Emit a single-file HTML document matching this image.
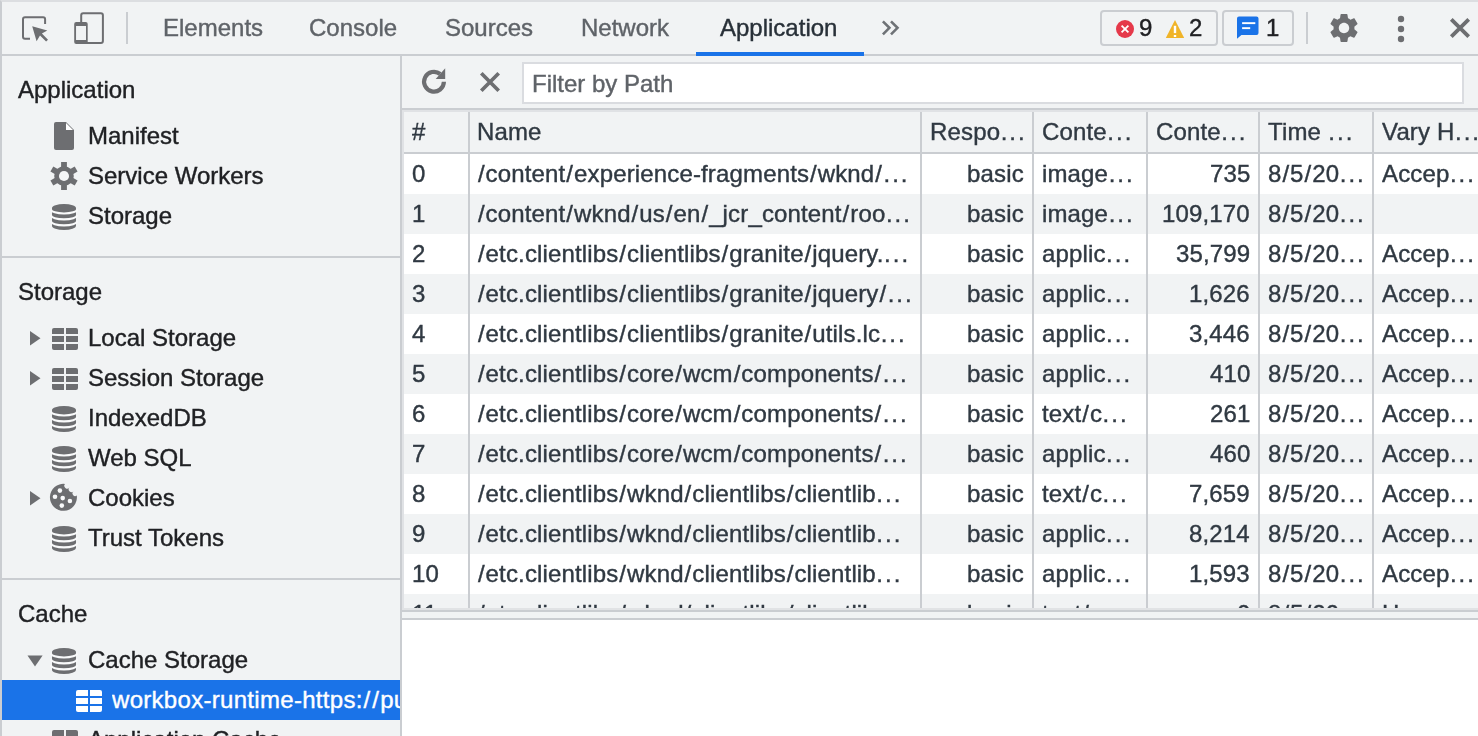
<!DOCTYPE html>
<html><head><meta charset="utf-8">
<style>
*{margin:0;padding:0;box-sizing:border-box}
html,body{width:1478px;height:736px;overflow:hidden;background:#fff}
body{-webkit-font-smoothing:antialiased;-webkit-text-stroke:0.4px currentColor;font-family:"Liberation Sans",sans-serif;font-size:24px;position:relative}
.a{position:absolute;white-space:nowrap}
.t{will-change:transform;position:absolute;white-space:nowrap;line-height:28px;height:28px}
#top{left:0;top:0;width:1478px;height:56px;background:#f1f3f4;border-bottom:2px solid #cacdd1;border-top:2px solid #dcdee1;border-left:2px solid #cacdd1}
.tab{color:#5f6368}
#side{left:0;top:56px;width:402px;height:680px;background:#f1f3f4;border-left:2px solid #cacdd1;border-right:2px solid #cacdd1}
.sh{color:#202124}
.si{color:#202124}
.sep{position:absolute;left:2px;width:398px;height:2px;background:#cacdd1}
#main{left:402px;top:56px;width:1076px;height:680px;background:#fff}
#ptb{left:402px;top:56px;width:1076px;height:54px;background:#f1f3f4;border-bottom:2px solid #cacdd1}
#filter{left:522px;top:62px;width:942px;height:42px;background:#fff;border:2px solid #dadce0}
#grid{left:402px;top:110px;width:1076px;height:498px;overflow:hidden;background:#fff;border-left:2px solid #e0e2e5;border-top:2px solid #e0e2e5}
.hdr{position:absolute;left:0;top:0;width:1076px;height:42px;background:#f1f3f4;border-bottom:2px solid #cacdd1}
.row{position:absolute;left:0;width:1076px;height:40px}
.row.g{background:#f1f3f4}
.c{will-change:transform;position:absolute;white-space:nowrap;overflow:hidden;color:#303942;line-height:28px;height:28px}
.s{margin:0 .9px}
.e{letter-spacing:2px;margin-left:.5px}
.c{letter-spacing:.15px}
.vl{position:absolute;top:0;width:2px;height:498px;background:#cacdd1}
</style></head><body>
<div id="top" class="a"></div>
<div class="t tab" style="left:163px;top:14px">Elements</div>
<div class="t tab" style="left:309px;top:14px">Console</div>
<div class="t tab" style="left:445px;top:14px">Sources</div>
<div class="t tab" style="left:581px;top:14px">Network</div>
<div class="t" style="left:720px;top:14px;color:#283038">Application</div>
<div class="a" style="left:696px;top:52px;width:168px;height:4px;background:#1a73e8"></div>
<div class="a" style="left:1100px;top:10px;width:118px;height:36px;border:2px solid #cacdd1;border-radius:4px"></div>
<div class="a" style="left:1222px;top:10px;width:72px;height:36px;border:2px solid #cacdd1;border-radius:4px"></div>
<div class="t" style="left:1139px;top:14px;color:#202124">9</div>
<div class="t" style="left:1189px;top:14px;color:#202124">2</div>
<div class="t" style="left:1266px;top:14px;color:#202124">1</div>
<div id="side" class="a"></div>
<div class="sep" style="top:256px"></div>
<div class="sep" style="top:578px"></div>
<div class="a" style="left:2px;top:680px;width:398px;height:40px;background:#1a73e8"></div>
<div class="t sh" style="left:18px;top:76px">Application</div>
<div class="t si" style="left:88px;top:122px">Manifest</div>
<div class="t si" style="left:88px;top:162px">Service Workers</div>
<div class="t si" style="left:88px;top:202px">Storage</div>
<div class="t sh" style="left:18px;top:278px">Storage</div>
<div class="t si" style="left:88px;top:324px">Local Storage</div>
<div class="t si" style="left:88px;top:364px">Session Storage</div>
<div class="t si" style="left:88px;top:404px">IndexedDB</div>
<div class="t si" style="left:88px;top:444px">Web SQL</div>
<div class="t si" style="left:88px;top:484px">Cookies</div>
<div class="t si" style="left:88px;top:524px">Trust Tokens</div>
<div class="t sh" style="left:18px;top:600px">Cache</div>
<div class="t si" style="left:88px;top:646px">Cache Storage</div>
<div class="t si" style="left:88px;top:726px">Application Cache</div>
<div class="a" style="left:112px;top:686px;width:288px;height:28px;line-height:28px;overflow:hidden;color:#fff;letter-spacing:.3px">workbox-runtime-https:<span class="s">/</span><span class="s">/</span>publish-p24020-e217804.adobeaemcloud.com/</div>
<div id="main" class="a"></div>
<div id="ptb" class="a"></div>
<div id="filter" class="a"></div>
<div class="t" style="left:532px;top:70px;color:#5f6368">Filter by Path</div>
<div class="a" style="left:402px;top:608px;width:1076px;height:12px;background:#f1f3f4;border-top:2px solid #e1e3e5;border-bottom:2px solid #cacdd1"></div><div class="a" style="left:402px;top:610px;width:1076px;height:2px;background:#cacdd1"></div>
<div id="grid" class="a">
<div class="hdr"></div>
<div class="c" style="left:8px;top:6px">#</div>
<div class="c" style="left:73px;top:6px">Name</div>
<div class="c" style="left:526px;top:6px">Respo<span class="e">...</span></div>
<div class="c" style="left:638px;top:6px">Conte<span class="e">...</span></div>
<div class="c" style="left:752px;top:6px">Conte<span class="e">...</span></div>
<div class="c" style="left:864px;top:6px">Time <span class="e">...</span></div>
<div class="c" style="left:978px;top:6px">Vary H<span class="e">...</span></div>
<div class="row" style="top:42px"><div class="c" style="left:8px;top:6px">0</div><div class="c" style="left:73px;top:6px"><span class="s">/</span>content<span class="s">/</span>experience-fragments<span class="s">/</span>wknd<span class="s">/</span><span class="e">...</span></div><div class="c" style="right:456px;top:6px">basic</div><div class="c" style="left:638px;top:6px">image<span class="e">...</span></div><div class="c" style="right:230px;top:6px">735</div><div class="c" style="left:864px;top:6px">8<span class="s">/</span>5<span class="s">/</span>20<span class="e">...</span></div><div class="c" style="left:978px;top:6px">Accep<span class="e">...</span></div></div>
<div class="row g" style="top:82px"><div class="c" style="left:8px;top:6px">1</div><div class="c" style="left:73px;top:6px"><span class="s">/</span>content<span class="s">/</span>wknd<span class="s">/</span>us<span class="s">/</span>en<span class="s">/</span>_jcr_content<span class="s">/</span>roo<span class="e">...</span></div><div class="c" style="right:456px;top:6px">basic</div><div class="c" style="left:638px;top:6px">image<span class="e">...</span></div><div class="c" style="right:230px;top:6px">109,170</div><div class="c" style="left:864px;top:6px">8<span class="s">/</span>5<span class="s">/</span>20<span class="e">...</span></div></div>
<div class="row" style="top:122px"><div class="c" style="left:8px;top:6px">2</div><div class="c" style="left:73px;top:6px"><span class="s">/</span>etc.clientlibs<span class="s">/</span>clientlibs<span class="s">/</span>granite<span class="s">/</span>jquery.<span class="e">...</span></div><div class="c" style="right:456px;top:6px">basic</div><div class="c" style="left:638px;top:6px">applic<span class="e">...</span></div><div class="c" style="right:230px;top:6px">35,799</div><div class="c" style="left:864px;top:6px">8<span class="s">/</span>5<span class="s">/</span>20<span class="e">...</span></div><div class="c" style="left:978px;top:6px">Accep<span class="e">...</span></div></div>
<div class="row g" style="top:162px"><div class="c" style="left:8px;top:6px">3</div><div class="c" style="left:73px;top:6px"><span class="s">/</span>etc.clientlibs<span class="s">/</span>clientlibs<span class="s">/</span>granite<span class="s">/</span>jquery<span class="s">/</span><span class="e">...</span></div><div class="c" style="right:456px;top:6px">basic</div><div class="c" style="left:638px;top:6px">applic<span class="e">...</span></div><div class="c" style="right:230px;top:6px">1,626</div><div class="c" style="left:864px;top:6px">8<span class="s">/</span>5<span class="s">/</span>20<span class="e">...</span></div><div class="c" style="left:978px;top:6px">Accep<span class="e">...</span></div></div>
<div class="row" style="top:202px"><div class="c" style="left:8px;top:6px">4</div><div class="c" style="left:73px;top:6px"><span class="s">/</span>etc.clientlibs<span class="s">/</span>clientlibs<span class="s">/</span>granite<span class="s">/</span>utils.lc<span class="e">...</span></div><div class="c" style="right:456px;top:6px">basic</div><div class="c" style="left:638px;top:6px">applic<span class="e">...</span></div><div class="c" style="right:230px;top:6px">3,446</div><div class="c" style="left:864px;top:6px">8<span class="s">/</span>5<span class="s">/</span>20<span class="e">...</span></div><div class="c" style="left:978px;top:6px">Accep<span class="e">...</span></div></div>
<div class="row g" style="top:242px"><div class="c" style="left:8px;top:6px">5</div><div class="c" style="left:73px;top:6px"><span class="s">/</span>etc.clientlibs<span class="s">/</span>core<span class="s">/</span>wcm<span class="s">/</span>components<span class="s">/</span><span class="e">...</span></div><div class="c" style="right:456px;top:6px">basic</div><div class="c" style="left:638px;top:6px">applic<span class="e">...</span></div><div class="c" style="right:230px;top:6px">410</div><div class="c" style="left:864px;top:6px">8<span class="s">/</span>5<span class="s">/</span>20<span class="e">...</span></div><div class="c" style="left:978px;top:6px">Accep<span class="e">...</span></div></div>
<div class="row" style="top:282px"><div class="c" style="left:8px;top:6px">6</div><div class="c" style="left:73px;top:6px"><span class="s">/</span>etc.clientlibs<span class="s">/</span>core<span class="s">/</span>wcm<span class="s">/</span>components<span class="s">/</span><span class="e">...</span></div><div class="c" style="right:456px;top:6px">basic</div><div class="c" style="left:638px;top:6px">text<span class="s">/</span>c<span class="e">...</span></div><div class="c" style="right:230px;top:6px">261</div><div class="c" style="left:864px;top:6px">8<span class="s">/</span>5<span class="s">/</span>20<span class="e">...</span></div><div class="c" style="left:978px;top:6px">Accep<span class="e">...</span></div></div>
<div class="row g" style="top:322px"><div class="c" style="left:8px;top:6px">7</div><div class="c" style="left:73px;top:6px"><span class="s">/</span>etc.clientlibs<span class="s">/</span>core<span class="s">/</span>wcm<span class="s">/</span>components<span class="s">/</span><span class="e">...</span></div><div class="c" style="right:456px;top:6px">basic</div><div class="c" style="left:638px;top:6px">applic<span class="e">...</span></div><div class="c" style="right:230px;top:6px">460</div><div class="c" style="left:864px;top:6px">8<span class="s">/</span>5<span class="s">/</span>20<span class="e">...</span></div><div class="c" style="left:978px;top:6px">Accep<span class="e">...</span></div></div>
<div class="row" style="top:362px"><div class="c" style="left:8px;top:6px">8</div><div class="c" style="left:73px;top:6px"><span class="s">/</span>etc.clientlibs<span class="s">/</span>wknd<span class="s">/</span>clientlibs<span class="s">/</span>clientlib<span class="e">...</span></div><div class="c" style="right:456px;top:6px">basic</div><div class="c" style="left:638px;top:6px">text<span class="s">/</span>c<span class="e">...</span></div><div class="c" style="right:230px;top:6px">7,659</div><div class="c" style="left:864px;top:6px">8<span class="s">/</span>5<span class="s">/</span>20<span class="e">...</span></div><div class="c" style="left:978px;top:6px">Accep<span class="e">...</span></div></div>
<div class="row g" style="top:402px"><div class="c" style="left:8px;top:6px">9</div><div class="c" style="left:73px;top:6px"><span class="s">/</span>etc.clientlibs<span class="s">/</span>wknd<span class="s">/</span>clientlibs<span class="s">/</span>clientlib<span class="e">...</span></div><div class="c" style="right:456px;top:6px">basic</div><div class="c" style="left:638px;top:6px">applic<span class="e">...</span></div><div class="c" style="right:230px;top:6px">8,214</div><div class="c" style="left:864px;top:6px">8<span class="s">/</span>5<span class="s">/</span>20<span class="e">...</span></div><div class="c" style="left:978px;top:6px">Accep<span class="e">...</span></div></div>
<div class="row" style="top:442px"><div class="c" style="left:8px;top:6px">10</div><div class="c" style="left:73px;top:6px"><span class="s">/</span>etc.clientlibs<span class="s">/</span>wknd<span class="s">/</span>clientlibs<span class="s">/</span>clientlib<span class="e">...</span></div><div class="c" style="right:456px;top:6px">basic</div><div class="c" style="left:638px;top:6px">applic<span class="e">...</span></div><div class="c" style="right:230px;top:6px">1,593</div><div class="c" style="left:864px;top:6px">8<span class="s">/</span>5<span class="s">/</span>20<span class="e">...</span></div><div class="c" style="left:978px;top:6px">Accep<span class="e">...</span></div></div>
<div class="row g" style="top:482px"><div class="c" style="left:8px;top:6px">11</div><div class="c" style="left:73px;top:6px"><span class="s">/</span>etc.clientlibs<span class="s">/</span>wknd<span class="s">/</span>clientlibs<span class="s">/</span>clientlib<span class="e">...</span></div><div class="c" style="right:456px;top:6px">basic</div><div class="c" style="left:638px;top:6px">text<span class="s">/</span>c<span class="e">...</span></div><div class="c" style="right:230px;top:6px">0</div><div class="c" style="left:864px;top:6px">8<span class="s">/</span>5<span class="s">/</span>20<span class="e">...</span></div><div class="c" style="left:978px;top:6px">Hea<span class="e">...</span></div></div>
<div class="vl" style="left:64px"></div>
<div class="vl" style="left:516px"></div>
<div class="vl" style="left:628px"></div>
<div class="vl" style="left:742px"></div>
<div class="vl" style="left:854px"></div>
<div class="vl" style="left:968px"></div>
</div>
<svg class="a" style="left:0;top:0" width="1478" height="736" viewBox="0 0 1478 736"><path d="M30,38.8 H25 a2,2 0 0 1 -2,-2 V19.2 a2,2 0 0 1 2,-2 H43.1 a2,2 0 0 1 2,2 V24" fill="none" stroke="#6d6e71" stroke-width="2"/><path d="M32.2,26.2 L47.3,30.6 L41.9,33.6 L48,39.7 L46.1,41.6 L40,35.5 L36.6,41.2 Z" fill="#6d6e71"/><rect x="81.2" y="13.2" width="21.7" height="29.7" rx="2" fill="none" stroke="#6d6e71" stroke-width="2"/><path fill-rule="evenodd" d="M76.2,22 H85.7 a2,2 0 0 1 2,2 V42 a2,2 0 0 1 -2,2 H76.2 a2,2 0 0 1 -2,-2 V24 a2,2 0 0 1 2,-2 Z M76.2,26 V40 H85.9 V26 Z" fill="#6d6e71"/><path d="M76.2,26 V40 H85.9 V26 Z" fill="#f1f3f4"/><rect x="126" y="12" width="2" height="32" fill="#cacdd1"/><path d="M882.9,21.3 L889.4,27.8 L882.9,34.3 M891,21.3 L897.5,27.8 L891,34.3" fill="none" stroke="#6e7276" stroke-width="2.6"/><circle cx="1125" cy="29" r="9" fill="#e5394a"/><path d="M1121.6,25.6 L1128.4,32.4 M1128.4,25.6 L1121.6,32.4" stroke="#fff" stroke-width="1.8"/><path d="M1175,20 L1184.2,37.9 H1165.8 Z" fill="#f0b429"/><rect x="1173.8" y="25.8" width="2.4" height="7.3" fill="#fff"/><rect x="1173.8" y="35" width="2.4" height="2" fill="#fff"/><path d="M1239,16.4 H1256.5 a2,2 0 0 1 2,2 V32.9 a2,2 0 0 1 -2,2 H1241.4 L1237,38.8 V18.4 a2,2 0 0 1 2,-2 Z" fill="#1a73e8"/><rect x="1242.1" y="22.2" width="13.2" height="1.9" fill="#fff"/><rect x="1242.1" y="27.2" width="8.1" height="1.9" fill="#fff"/><rect x="1306" y="12" width="2" height="32" fill="#cacdd1"/><path transform="translate(1326.59,10.59) scale(1.4508)" d="M19.14,12.94c0.04-0.3,0.06-0.61,0.06-0.94c0-0.32-0.02-0.64-0.07-0.94l2.03-1.58c0.18-0.14,0.23-0.41,0.12-0.61l-1.92-3.32c-0.12-0.22-0.37-0.29-0.59-0.22l-2.39,0.96c-0.5-0.38-1.03-0.7-1.620-0.94L14.4,2.81c-0.04-0.24-0.24-0.41-0.48-0.41h-3.84c-0.24,0-0.43,0.17-0.47,0.41L9.25,5.35C8.66,5.59,8.12,5.92,7.63,6.29L5.24,5.33c-0.22-0.08-0.47,0-0.59,0.22L2.74,8.87C2.62,9.08,2.66,9.34,2.86,9.48l2.03,1.58C4.84,11.36,4.8,11.690,4.8,12s0.02,0.64,0.07,0.94l-2.03,1.58c-0.18,0.14-0.23,0.41-0.12,0.61l1.92,3.32c0.12,0.22,0.37,0.29,0.59,0.22l2.39-0.96c0.5,0.38,1.03,0.7,1.62,0.94l0.36,2.54c0.05,0.24,0.24,0.41,0.48,0.41h3.84c0.24,0,0.44-0.17,0.47-0.41l0.36-2.54c0.59-0.24,1.13-0.56,1.62-0.94l2.39,0.96c0.22,0.08,0.47,0,0.59-0.22l1.92-3.32c0.12-0.22,0.07-0.47-0.12-0.61L19.14,12.94z M12,15.6c-1.98,0-3.6-1.62-3.6-3.6s1.62-3.6,3.6-3.6s3.6,1.62,3.6,3.6S13.98,15.6,12,15.6z" fill="#6d6e71"/><circle cx="1401" cy="19" r="3.2" fill="#6d6e71"/><circle cx="1401" cy="29" r="3.2" fill="#6d6e71"/><circle cx="1401" cy="39" r="3.2" fill="#6d6e71"/><path d="M1451.3,19.3 L1468.7,36.7 M1468.7,19.3 L1451.3,36.7" stroke="#6d6e71" stroke-width="3.8"/><path d="M443.9,81.8 A9.9,9.9 0 1 1 440.2,74.0" fill="none" stroke="#6d6e71" stroke-width="4.2"/><path d="M435.7,79 L445.2,68.3 V79 Z" fill="#6d6e71"/><path d="M481.3,73.3 L498.7,90.7 M498.7,73.3 L481.3,90.7" stroke="#6d6e71" stroke-width="3.7"/><path d="M56,122 H66 L74,130 V148 a2,2 0 0 1 -2,2 H56 a2,2 0 0 1 -2,-2 V124 a2,2 0 0 1 2,-2 Z" fill="#6d6e71"/><path d="M66,123 L73,130 H66 Z" fill="#fff"/><g transform="translate(64,176)"><circle r="9.8" fill="#6d6e71"/><rect x="-2.9" y="-14" width="5.8" height="14" fill="#6d6e71" transform="rotate(0)"/><rect x="-2.9" y="-14" width="5.8" height="14" fill="#6d6e71" transform="rotate(60)"/><rect x="-2.9" y="-14" width="5.8" height="14" fill="#6d6e71" transform="rotate(120)"/><rect x="-2.9" y="-14" width="5.8" height="14" fill="#6d6e71" transform="rotate(180)"/><rect x="-2.9" y="-14" width="5.8" height="14" fill="#6d6e71" transform="rotate(240)"/><rect x="-2.9" y="-14" width="5.8" height="14" fill="#6d6e71" transform="rotate(300)"/><circle r="5.05" fill="#f5f6f7"/></g><path d="M52,208.05 A12,4.05 0 0 1 76,208.05 L76,226 A12,4.05 0 0 1 52,226 Z" fill="#6d6e71"/><path d="M51,209.40 A13,4.05 0 0 0 77,209.40" fill="none" stroke="#f9fafb" stroke-width="2.1"/><path d="M51,215.35 A13,4.05 0 0 0 77,215.35" fill="none" stroke="#f9fafb" stroke-width="2.1"/><path d="M51,221.30 A13,4.05 0 0 0 77,221.30" fill="none" stroke="#f9fafb" stroke-width="2.1"/><path d="M30,331 L40.5,338.2 L30,345.4 Z" fill="#6d6e71"/><g fill="#6d6e71"><path d="M52,334 V330 a2,2 0 0 1 2,-2 H64 V334 Z"/><path d="M66,328 H76 a2,2 0 0 1 2,2 V334 H66 Z"/><rect x="52" y="336" width="12" height="6"/><rect x="66" y="336" width="12" height="6"/><path d="M52,344 H64 V350 H54 a2,2 0 0 1 -2,-2 Z"/><path d="M66,344 H78 V348 a2,2 0 0 1 -2,2 H66 Z"/></g><path d="M30,371 L40.5,378.2 L30,385.4 Z" fill="#6d6e71"/><g fill="#6d6e71"><path d="M52,374 V370 a2,2 0 0 1 2,-2 H64 V374 Z"/><path d="M66,368 H76 a2,2 0 0 1 2,2 V374 H66 Z"/><rect x="52" y="376" width="12" height="6"/><rect x="66" y="376" width="12" height="6"/><path d="M52,384 H64 V390 H54 a2,2 0 0 1 -2,-2 Z"/><path d="M66,384 H78 V388 a2,2 0 0 1 -2,2 H66 Z"/></g><path d="M52,410.05 A12,4.05 0 0 1 76,410.05 L76,428 A12,4.05 0 0 1 52,428 Z" fill="#6d6e71"/><path d="M51,411.40 A13,4.05 0 0 0 77,411.40" fill="none" stroke="#f9fafb" stroke-width="2.1"/><path d="M51,417.35 A13,4.05 0 0 0 77,417.35" fill="none" stroke="#f9fafb" stroke-width="2.1"/><path d="M51,423.30 A13,4.05 0 0 0 77,423.30" fill="none" stroke="#f9fafb" stroke-width="2.1"/><path d="M52,450.05 A12,4.05 0 0 1 76,450.05 L76,468 A12,4.05 0 0 1 52,468 Z" fill="#6d6e71"/><path d="M51,451.40 A13,4.05 0 0 0 77,451.40" fill="none" stroke="#f9fafb" stroke-width="2.1"/><path d="M51,457.35 A13,4.05 0 0 0 77,457.35" fill="none" stroke="#f9fafb" stroke-width="2.1"/><path d="M51,463.30 A13,4.05 0 0 0 77,463.30" fill="none" stroke="#f9fafb" stroke-width="2.1"/><path d="M30,491 L40.5,498.2 L30,505.4 Z" fill="#6d6e71"/><path d="M65,483.9 A13.5,13.5 0 1 0 76.8,495.5 A2.6,2.6 0 0 1 73.6,491.2 A2.6,2.6 0 0 1 69.4,487.6 A2.6,2.6 0 0 1 65,483.9 Z" fill="#6d6e71"/><circle cx="59.9" cy="490.6" r="2.3" fill="#f9fafb"/><circle cx="55" cy="496.7" r="2.3" fill="#f9fafb"/><circle cx="62.7" cy="498.1" r="2.3" fill="#f9fafb"/><circle cx="69.9" cy="501" r="2.3" fill="#f9fafb"/><circle cx="61.8" cy="505.6" r="2.3" fill="#f9fafb"/><path d="M52,530.05 A12,4.05 0 0 1 76,530.05 L76,548 A12,4.05 0 0 1 52,548 Z" fill="#6d6e71"/><path d="M51,531.40 A13,4.05 0 0 0 77,531.40" fill="none" stroke="#f9fafb" stroke-width="2.1"/><path d="M51,537.35 A13,4.05 0 0 0 77,537.35" fill="none" stroke="#f9fafb" stroke-width="2.1"/><path d="M51,543.30 A13,4.05 0 0 0 77,543.30" fill="none" stroke="#f9fafb" stroke-width="2.1"/><path d="M27.5,655.6 H42.6 L35,666.4 Z" fill="#6d6e71"/><path d="M52,652.05 A12,4.05 0 0 1 76,652.05 L76,670 A12,4.05 0 0 1 52,670 Z" fill="#6d6e71"/><path d="M51,653.40 A13,4.05 0 0 0 77,653.40" fill="none" stroke="#f9fafb" stroke-width="2.1"/><path d="M51,659.35 A13,4.05 0 0 0 77,659.35" fill="none" stroke="#f9fafb" stroke-width="2.1"/><path d="M51,665.30 A13,4.05 0 0 0 77,665.30" fill="none" stroke="#f9fafb" stroke-width="2.1"/><g fill="#fff"><path d="M76,696 V692 a2,2 0 0 1 2,-2 H88 V696 Z"/><path d="M90,690 H100 a2,2 0 0 1 2,2 V696 H90 Z"/><rect x="76" y="698" width="12" height="6"/><rect x="90" y="698" width="12" height="6"/><path d="M76,706 H88 V712 H78 a2,2 0 0 1 -2,-2 Z"/><path d="M90,706 H102 V710 a2,2 0 0 1 -2,2 H90 Z"/></g><g fill="#6d6e71"><path d="M52,736 V732 a2,2 0 0 1 2,-2 H64 V736 Z"/><path d="M66,730 H76 a2,2 0 0 1 2,2 V736 H66 Z"/><rect x="52" y="738" width="12" height="6"/><rect x="66" y="738" width="12" height="6"/><path d="M52,746 H64 V752 H54 a2,2 0 0 1 -2,-2 Z"/><path d="M66,746 H78 V750 a2,2 0 0 1 -2,2 H66 Z"/></g></svg>
</body></html>
